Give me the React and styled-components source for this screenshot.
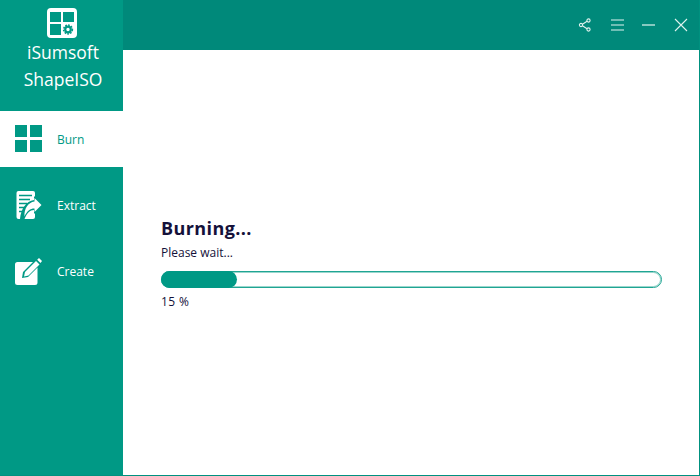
import React from "react";
import styled, { createGlobalStyle } from "styled-components";

const Global = createGlobalStyle`
  html, body { margin: 0; padding: 0; background: #fff; }
  body { font-family: "Open Sans", "Noto Sans", "Liberation Sans", sans-serif; }
`;

const Win = styled.div`
  box-sizing: border-box;
  width: 700px;
  height: 476px;
  display: flex;
  border: 1px solid #00917f;
  border-left: 0;
  border-top: 0;
  background: #fff;
  overflow: hidden;
`;

const Sidebar = styled.aside`
  width: 123px;
  flex: none;
  background: #009985;
  display: flex;
  flex-direction: column;
`;

const Brand = styled.div`
  height: 111px;
  flex: none;
  padding-top: 8px;
  box-sizing: border-box;
  display: flex;
  flex-direction: column;
  align-items: center;
  svg { display: block; margin-bottom: 1px; }
`;

const BrandName = styled.div`
  padding-left: 3px;
  color: #fff;
  font-size: 17.5px;
  line-height: 27px;
  text-align: center;
`;

const Nav = styled.nav`
  display: flex;
  flex-direction: column;
  gap: 10px;
`;

const Item = styled.div`
  height: 56px;
  display: flex;
  align-items: center;
  padding-left: 14px;
  gap: 15px;
  font-size: 12px;
  background: ${(p) => (p.$active ? "#fff" : "transparent")};
  color: ${(p) => (p.$active ? "#009985" : "#fff")};
  svg { flex: none; display: block; }
`;

const Right = styled.div`
  flex: 1;
  display: flex;
  flex-direction: column;
  min-width: 0;
`;

const Header = styled.header`
  height: 50px;
  flex: none;
  background: #00897a;
  display: flex;
  align-items: center;
  justify-content: flex-end;
  padding-right: 11px;
  gap: 18px;
  svg { display: block; }
`;

const Main = styled.main`
  flex: 1;
  display: flex;
  flex-direction: column;
  padding: 168px 37px 0 38px;
`;

const Title = styled.h1`
  margin: 0;
  font-size: 18px;
  line-height: 20px;
  letter-spacing: 0.4px;
  font-weight: 700;
  color: #14113a;
`;

const Sub = styled.p`
  margin: 6px 0 0;
  font-size: 12px;
  line-height: 18px;
  color: #14113a;
`;

const Track = styled.div`
  box-sizing: border-box;
  margin-top: 9px;
  height: 17px;
  border: 1px solid #1fa593;
  box-shadow: inset 0 0 0 1px #9ad6cd;
  border-radius: 9px;
  position: relative;
`;

const Fill = styled.div`
  position: absolute;
  left: -1px;
  top: -1px;
  bottom: -1px;
  background: #009985;
  border-radius: 9px;
`;

const Percent = styled.div`
  margin-top: 5px;
  font-size: 12px;
  letter-spacing: 0.4px;
  line-height: 18px;
  color: #14113a;
`;

const Logo = () => (
  <svg width="30" height="30" viewBox="0 0 30 30">
    <rect width="30" height="30" rx="4" fill="#fff" />
    <g fill="#009985">
      <rect x="3" y="4" width="11" height="10" />
      <rect x="16" y="4" width="11" height="10" />
      <rect x="3" y="16" width="11" height="11" />
    </g>
    <circle cx="21" cy="21.500" r="2.800" fill="none" stroke="#009985" strokeWidth="2.200" />
    <circle cx="21" cy="21.500" r="4.400" fill="none" stroke="#009985" strokeWidth="1.500" strokeDasharray="1.700 1.200" />
  </svg>
);

const BurnIcon = () => (
  <svg width="28" height="28" viewBox="0 0 28 28" fill="#009985">
    <rect x="1" y="0" width="12" height="12" />
    <rect x="16" y="0" width="12" height="12" />
    <rect x="1" y="15" width="12" height="12" />
    <rect x="16" y="15" width="12" height="12" />
  </svg>
);

const ExtractIcon = () => (
  <svg width="28" height="28" viewBox="0 0 28 28">
    <rect x="2.500" y="0" width="18.500" height="28" rx="2" fill="#fff" />
    <path d="M5 4.500H18M5 8.500H16M5 12.500H13M5 16.500H11M5 20.500H9" stroke="#009985" strokeWidth="1.300" />
    <path d="M20 5L29 14 20 23V19C16 19 13 22 10.500 28H6C7 18 12 10 20 9Z" fill="#009985" />
    <path d="M20.500 7L27.500 14 20.500 21V17.500C16 17.500 13 20 10.500 25.500 10 17.500 14 11.500 20.500 10.500Z" fill="#fff" />
  </svg>
);

const CreateIcon = () => (
  <svg width="28" height="28" viewBox="0 0 28 28">
    <path d="M3.500 5H19L9 15 8 21 14 20 23.500 10.500V25.500Q23.500 28 21 28H3.500Q1 28 1 25.500V7.500Q1 5 3.500 5Z" fill="#fff" />
    <path d="M11 15L22 4 25.500 7.500 14.500 18.500 10 19.500Z" fill="#fff" />
    <path d="M23.200 2.800L25 1 28 4 26.500 6Z" fill="#fff" />
  </svg>
);

const ShareIcon = () => (
  <svg width="14" height="14" viewBox="0 0 14 14" fill="none" stroke="#dff3ef" strokeWidth="1.100">
    <circle cx="10.500" cy="2.500" r="1.600" />
    <circle cx="3" cy="7" r="1.600" />
    <circle cx="10.500" cy="11.500" r="1.600" />
    <path d="M4.400 6.200L9.100 3.300M4.400 7.800L9.100 10.700" />
  </svg>
);

const MenuIcon = () => (
  <svg width="14" height="14" viewBox="0 0 14 14" stroke="#dff3ef" strokeWidth="1.200">
    <path d="M1 2H14M1 7H14M1 12H14" />
  </svg>
);

const MinIcon = () => (
  <svg width="14" height="14" viewBox="0 0 14 14" stroke="#dff3ef" strokeWidth="1.200">
    <path d="M0 7H13" />
  </svg>
);

const CloseIcon = () => (
  <svg width="14" height="14" viewBox="0 0 14 14" stroke="#dff3ef" strokeWidth="1.100">
    <path d="M1 1L13 13M13 1L1 13" />
  </svg>
);

export default function App() {
  return (
    <>
      <Global />
      <Win>
        <Sidebar>
          <Brand>
            <Logo />
            <BrandName>
              iSumsoft
              <br />
              ShapeISO
            </BrandName>
          </Brand>
          <Nav>
            <Item $active>
              <BurnIcon />
              Burn
            </Item>
            <Item>
              <ExtractIcon />
              Extract
            </Item>
            <Item>
              <CreateIcon />
              Create
            </Item>
          </Nav>
        </Sidebar>
        <Right>
          <Header>
            <ShareIcon />
            <MenuIcon />
            <MinIcon />
            <CloseIcon />
          </Header>
          <Main>
            <Title>Burning...</Title>
            <Sub>Please wait...</Sub>
            <Track>
              <Fill style={{ width: "15.2%" }} />
            </Track>
            <Percent>15 %</Percent>
          </Main>
        </Right>
      </Win>
    </>
  );
}
